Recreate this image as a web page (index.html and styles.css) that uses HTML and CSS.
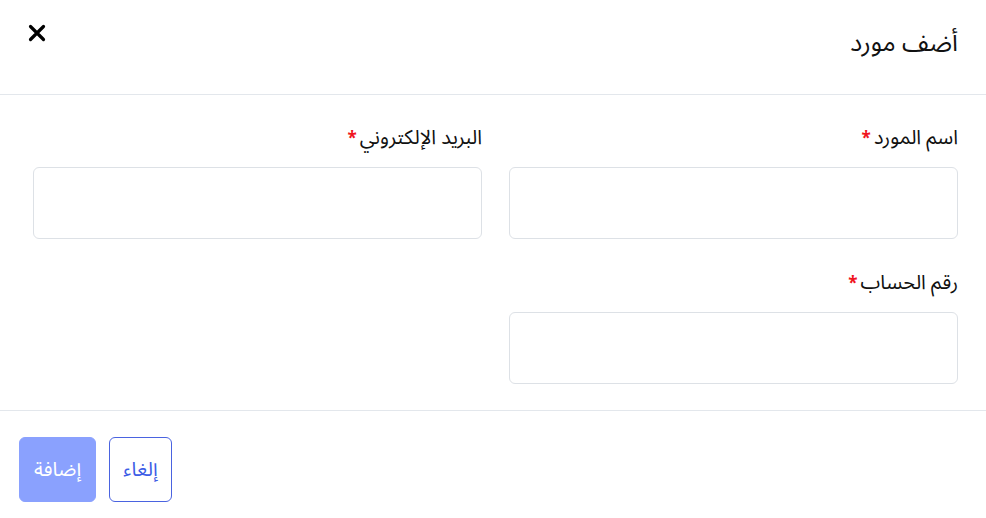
FILE: index.html
```html
<!DOCTYPE html>
<html lang="ar" dir="rtl">
<head>
<meta charset="utf-8">
<link rel="stylesheet" href="styles.css">
</head>
<body>
<div class="modal">
  <header class="head">
    <h1 class="title">أضف مورد</h1>
    <button class="close" aria-label="close">
      <svg width="18" height="18" viewBox="0 0 18 18"><path d="M2.5 2.5L15.5 15.5M15.5 2.5L2.5 15.5" stroke="#000" stroke-width="3.2" stroke-linecap="round"/></svg>
    </button>
  </header>
  <main class="body">
    <div class="grid">
      <div class="field">
        <label class="label">اسم المورد<span class="req">*</span></label>
        <input class="input" type="text">
      </div>
      <div class="field">
        <label class="label">البريد الإلكتروني<span class="req">*</span></label>
        <input class="input" type="text">
      </div>
      <div class="field">
        <label class="label">رقم الحساب<span class="req">*</span></label>
        <input class="input" type="text">
      </div>
    </div>
  </main>
  <footer class="foot">
    <button class="btn cancel">إلغاء</button>
    <button class="btn add">إضافة</button>
  </footer>
</div>
</body>
</html>
```
FILE: styles.css
```css
* { box-sizing: border-box; }
html, body { margin: 0; padding: 0; background: #fff; }
body { font-family: "Noto Sans Arabic", "Noto Sans", "DejaVu Sans", sans-serif; color: #111; width: 986px; height: 518px; overflow: hidden; }
.modal { display: flex; flex-direction: column; }
.head { height: 95px; border-bottom: 1px solid #e3e7ec; display: flex; justify-content: space-between; align-items: flex-start; padding: 0 28px 0 28px; }
.title { margin: 26px 0 0; font-size: 25px; font-weight: 400; line-height: 34px; }
.close { margin-top: 24px; border: 0; background: none; padding: 0; width: 18px; height: 18px; cursor: pointer; }
.close svg { display: block; }
.body { height: 316px; border-bottom: 1px solid #e3e7ec; padding: 29px 28px 0 33px; }
.grid { display: grid; grid-template-columns: 1fr 1fr; column-gap: 27px; row-gap: 30px; }
.field { display: flex; flex-direction: column; }
.label { font-size: 20px; line-height: 28px; height: 28px; margin-bottom: 15px; }
.req { color: #f0141e; font-size: 17px; font-weight: 700; margin-right: 3px; line-height: 0; }
.input { height: 72px; border: 1px solid #dde1e6; border-radius: 6px; font-size: 16px; }
.foot { display: flex; flex-direction: row-reverse; justify-content: flex-end; gap: 13px; padding: 26px 19px 0; direction: ltr; }
.btn { height: 65px; border-radius: 6px; font-family: inherit; font-size: 20px; padding: 0; cursor: pointer; }
.add { background: #8aa1fe; color: #fff; border: 1px solid #8aa1fe; width: 77px; }
.cancel { background: #fff; color: #3d5de6; border: 1px solid #4a63e0; width: 63px; }
```
